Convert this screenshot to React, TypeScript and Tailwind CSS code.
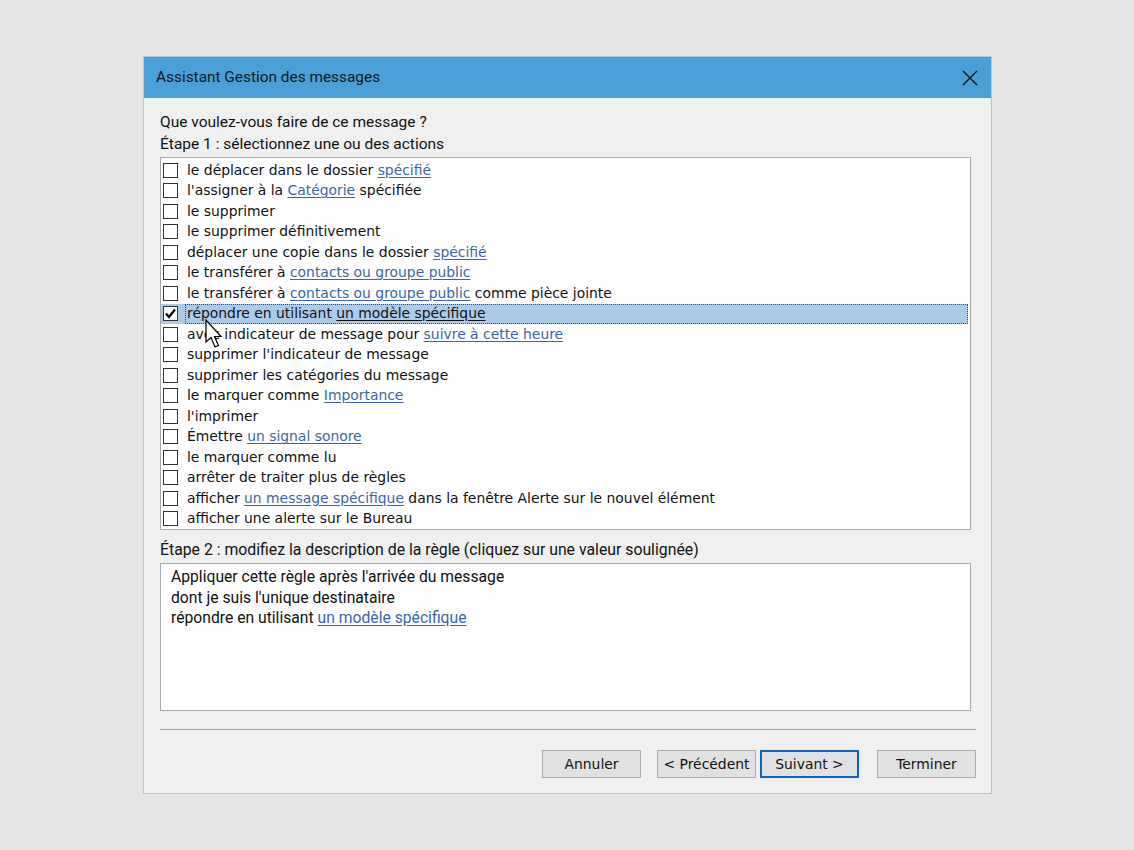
import React from 'react';

type Part = string | { link: string };

interface Action {
  parts: Part[];
  checked?: boolean;
}

const actions: Action[] = [
  { parts: ['le déplacer dans le dossier ', { link: 'spécifié' }] },
  { parts: ["l'assigner à la ", { link: 'Catégorie' }, ' spécifiée'] },
  { parts: ['le supprimer'] },
  { parts: ['le supprimer définitivement'] },
  { parts: ['déplacer une copie dans le dossier ', { link: 'spécifié' }] },
  { parts: ['le transférer à ', { link: 'contacts ou groupe public' }] },
  { parts: ['le transférer à ', { link: 'contacts ou groupe public' }, ' comme pièce jointe'] },
  { parts: ['répondre en utilisant ', { link: 'un modèle spécifique' }], checked: true },
  { parts: ['avec indicateur de message pour ', { link: 'suivre à cette heure' }] },
  { parts: ["supprimer l'indicateur de message"] },
  { parts: ['supprimer les catégories du message'] },
  { parts: ['le marquer comme ', { link: 'Importance' }] },
  { parts: ["l'imprimer"] },
  { parts: ['Émettre ', { link: 'un signal sonore' }] },
  { parts: ['le marquer comme lu'] },
  { parts: ['arrêter de traiter plus de règles'] },
  { parts: ['afficher ', { link: 'un message spécifique' }, ' dans la fenêtre Alerte sur le nouvel élément'] },
  { parts: ['afficher une alerte sur le Bureau'] },
];

// list + buttons use a wide Tahoma-like face, labels a narrower one
const listFont = { fontFamily: '"DejaVu Sans", Verdana, sans-serif' };
const narrowFont = { fontFamily: 'Roboto, "Liberation Sans", sans-serif' };

const CheckBox: React.FC<{ checked?: boolean }> = ({ checked }) => (
  <span className="w-[15px] h-[15px] border border-[#333333] bg-white flex items-center justify-center shrink-0">
    {checked && (
      <svg width="13" height="13" viewBox="0 0 13 13">
        <path d="M2 6.5 L5 10 L11 2.5" fill="none" stroke="#000" strokeWidth="2.2" />
      </svg>
    )}
  </span>
);

const ActionRow: React.FC<{ action: Action }> = ({ action }) => {
  const selected = action.checked;
  return (
    <div className={`h-[20.5px] flex items-center pl-[2px] ${selected ? 'bg-[#aacbea]' : ''}`}>
      <CheckBox checked={action.checked} />
      <span
        className={`ml-[7px] flex-1 h-full flex items-center pl-[1px] text-[13.9px] text-[#111] ${
          selected ? 'border border-dotted border-[#444]' : 'border border-transparent'
        }`}
      >
        {action.parts.map((p, i) =>
          typeof p === 'string' ? (
            <span key={i} className="whitespace-pre">{p}</span>
          ) : (
            <span
              key={i}
              className={`underline underline-offset-2 whitespace-pre ${selected ? 'text-[#111]' : 'text-[#3a66a8]'}`}
            >
              {p.link}
            </span>
          )
        )}
      </span>
    </div>
  );
};

const Button: React.FC<{ label: string; focused?: boolean; className?: string }> = ({
  label,
  focused,
  className = '',
}) => (
  <button
    className={`w-[99px] h-[28px] bg-[#e1e1e1] text-[13.9px] text-[#111] flex items-center justify-center ${
      focused ? 'border-2 border-[#0a64c8]' : 'border border-[#adadad]'
    } ${className}`}
    style={listFont}
  >
    {label}
  </button>
);

const Cursor: React.FC = () => (
  <svg className="absolute left-[205px] top-[319px]" width="20" height="32" viewBox="0 0 20 32">
    <path
      d="M1 1 L1 23 L6 18.5 L10 28 L13.5 26.5 L9.5 17.5 L16 17.5 Z"
      fill="#fff"
      stroke="#000"
      strokeWidth="1.2"
    />
  </svg>
);

export default function App() {
  return (
    <div className="relative w-[1134px] h-[850px] bg-[#e6e6e6] overflow-hidden">
      <div className="absolute left-[143px] top-[56px] w-[849px] h-[738px] border border-[#a7cbe6] bg-[#f0f0f0] flex flex-col">
        <div className="h-[41px] bg-[#4aa0d6] flex items-center justify-between pl-[12px] pr-[13px]">
          <span className="text-[15.4px] text-[#101820]" style={narrowFont}>
            Assistant Gestion des messages
          </span>
          <svg width="16" height="16" viewBox="0 0 16 16">
            <path d="M1 1 L15 15 M15 1 L1 15" stroke="#111" strokeWidth="1.4" />
          </svg>
        </div>

        <div className="flex flex-col pl-[16px] pr-[16px]">
          <div className="mt-[15px] h-[20px] flex items-center text-[15.5px] text-[#111]" style={narrowFont}>
            Que voulez-vous faire de ce message ?
          </div>
          <div className="mt-[2px] h-[20px] flex items-center text-[15.5px] text-[#111]" style={narrowFont}>
            Étape 1 : sélectionnez une ou des actions
          </div>
          <div
            className="mt-[2px] w-[811px] h-[373px] border border-[#a9a9a9] bg-white pt-[2px] pr-[2px]"
            style={listFont}
          >
            {actions.map((a, i) => (
              <ActionRow key={i} action={a} />
            ))}
          </div>

          <div className="mt-[10px] h-[20px] flex items-center text-[15.8px] text-[#111]" style={narrowFont}>
            Étape 2 : modifiez la description de la règle (cliquez sur une valeur soulignée)
          </div>
          <div
            className="mt-[3px] w-[811px] h-[148px] border border-[#a9a9a9] bg-white pt-[3px] pl-[10px] text-[15.7px] text-[#111]"
            style={narrowFont}
          >
            <div className="h-[20.5px] flex items-center">Appliquer cette règle après l'arrivée du message</div>
            <div className="h-[20.5px] flex items-center">dont je suis l'unique destinataire</div>
            <div className="h-[20.5px] flex items-center">
              <span className="whitespace-pre">répondre en utilisant </span>
              <span className="underline underline-offset-2 text-[#3a66a8]">un modèle spécifique</span>
            </div>
          </div>

          <div className="mt-[18px] w-[816px] border-t border-[#a0a0a0]" />

          <div className="mt-[20px] w-[816px] flex justify-end">
            <Button label="Annuler" />
            <Button label="< Précédent" className="ml-[16px]" />
            <Button label="Suivant >" focused className="ml-[4px]" />
            <Button label="Terminer" className="ml-[18px]" />
          </div>
        </div>
      </div>
      <Cursor />
    </div>
  );
}
